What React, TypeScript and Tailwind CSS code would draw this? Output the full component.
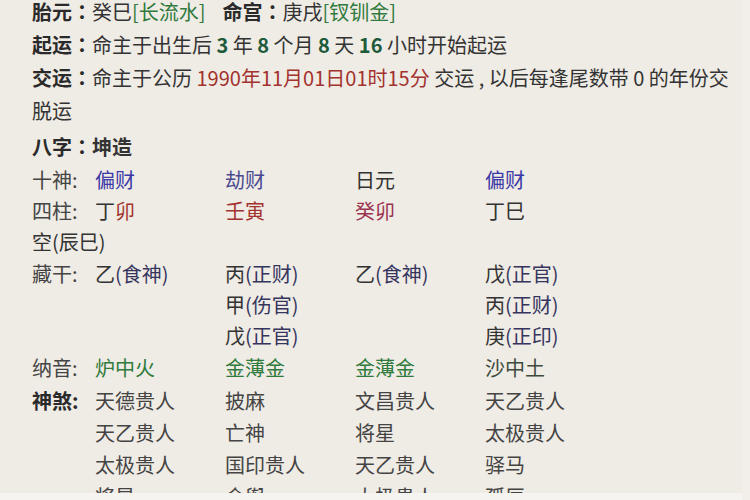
import React from "react";

const font = { fontFamily: '"Noto Sans CJK SC", "Noto Sans", sans-serif' };
const tcFont = { fontFamily: '"Noto Sans CJK TC", "Noto Sans CJK SC", sans-serif' };

const Blue = ({ children }: { children: React.ReactNode }) => (
  <span className="text-[#3b3aa6]">{children}</span>
);
const Red = ({ children }: { children: React.ReactNode }) => (
  <span className="text-[#a3332e]">{children}</span>
);
const Green = ({ children }: { children: React.ReactNode }) => (
  <span className="text-[#2f7a3c]">{children}</span>
);
const Num = ({ children }: { children: React.ReactNode }) => (
  <span className="font-bold text-[#1d5a3a]">{children}</span>
);
const P = ({ children }: { children: React.ReactNode }) => <span style={tcFont}>{children}</span>;

function GridRow({
  label,
  cells,
  h = "h-[31.3px]",
}: {
  label?: React.ReactNode;
  cells: React.ReactNode[];
  h?: string;
}) {
  return (
    <div className={`flex ${h} items-center`}>
      <div className="w-[63px] shrink-0">{label}</div>
      {cells.map((c, i) => (
        <div key={i} className="w-[130px] shrink-0">
          {c}
        </div>
      ))}
    </div>
  );
}

const Cang = ({ s, g }: { s: string; g: string }) => (
  <span>
    {s}
    <span className="text-[#35355e]">({g})</span>
  </span>
);

export default function App() {
  return (
    <div
      className="relative h-[500px] w-[750px] overflow-hidden bg-[#efebe5] text-[20px] text-[#333]"
      style={font}
    >
      <div className="-mt-[5px] pl-[32px]">
        <div className="flex h-[33px] items-center whitespace-nowrap">
          <span className="font-bold text-[#2a2a2a]">
            胎元<P>：</P>
          </span>
          <span>癸巳</span>
          <Green>[长流水]</Green>
          <span className="ml-[17px] font-bold text-[#2a2a2a]">
            命宫<P>：</P>
          </span>
          <span>庚戌</span>
          <Green>[钗钏金]</Green>
        </div>
        <div className="flex h-[33px] items-center whitespace-nowrap">
          <span className="font-bold text-[#2a2a2a]">
            起运<P>：</P>
          </span>
          <span>
            命主于出生后 <Num>3</Num> 年 <Num>8</Num> 个月 <Num>8</Num> 天 <Num>16</Num> 小时开始起运
          </span>
        </div>
        <div className="flex h-[33px] items-center whitespace-nowrap">
          <span className="font-bold text-[#2a2a2a]">
            交运<P>：</P>
          </span>
          <span>
            命主于公历 <Red>1990年11月01日01时15分</Red> 交运 , 以后每逢尾数带 0 的年份交
          </span>
        </div>
        <div className="flex h-[33px] items-center">
          <span>脱运</span>
        </div>
        <div className="flex h-[37px] items-center pt-[3px]">
          <span className="font-bold text-[#2a2a2a]">
            八字<P>：</P>
          </span>
          <span className="font-bold">坤造</span>
        </div>

        <div>
          <GridRow
            label={<span className="text-[#444]">十神:</span>}
            cells={[
              <Blue>偏财</Blue>,
              <span className="text-[#4a4a90]">劫财</span>,
              <span>日元</span>,
              <Blue>偏财</Blue>,
            ]}
          />
          <GridRow
            label={<span className="text-[#444]">四柱:</span>}
            cells={[
              <span>
                丁<Red>卯</Red>
              </span>,
              <Red>壬寅</Red>,
              <span className="text-[#9a3350]">癸卯</span>,
              <span>丁巳</span>,
            ]}
          />
          <div className="flex h-[31.3px] items-center">
            <span>空(辰巳)</span>
          </div>
          <GridRow
            label={<span className="text-[#444]">藏干:</span>}
            cells={[
              <Cang s="乙" g="食神" />,
              <Cang s="丙" g="正财" />,
              <Cang s="乙" g="食神" />,
              <Cang s="戊" g="正官" />,
            ]}
          />
          <GridRow cells={[<span />, <Cang s="甲" g="伤官" />, <span />, <Cang s="丙" g="正财" />]} />
          <GridRow cells={[<span />, <Cang s="戊" g="正官" />, <span />, <Cang s="庚" g="正印" />]} />
          <GridRow
            h="h-[33px]"
            label={<span className="text-[#444]">纳音:</span>}
            cells={[
              <Green>炉中火</Green>,
              <Green>金薄金</Green>,
              <Green>金薄金</Green>,
              <span className="text-[#3d4a3d]">沙中土</span>,
            ]}
          />
          <div className="text-[#444]">
            <GridRow
              h="h-[32px]"
              label={<span className="font-bold text-[#2a2a2a]">神煞:</span>}
              cells={[<span>天德贵人</span>, <span>披麻</span>, <span>文昌贵人</span>, <span>天乙贵人</span>]}
            />
            <GridRow
              h="h-[32px]"
              cells={[<span>天乙贵人</span>, <span>亡神</span>, <span>将星</span>, <span>太极贵人</span>]}
            />
            <GridRow
              h="h-[32px]"
              cells={[<span>太极贵人</span>, <span>国印贵人</span>, <span>天乙贵人</span>, <span>驿马</span>]}
            />
            <GridRow
              h="h-[32px]"
              cells={[<span>将星</span>, <span>金舆</span>, <span>太极贵人</span>, <span>孤辰</span>]}
            />
          </div>
        </div>
      </div>
      <div className="absolute bottom-0 left-0 h-[7px] w-full bg-[#f6f4f1]" />
      <div className="absolute right-0 top-0 h-full w-[8px] bg-[#f2efeb]" />
    </div>
  );
}
